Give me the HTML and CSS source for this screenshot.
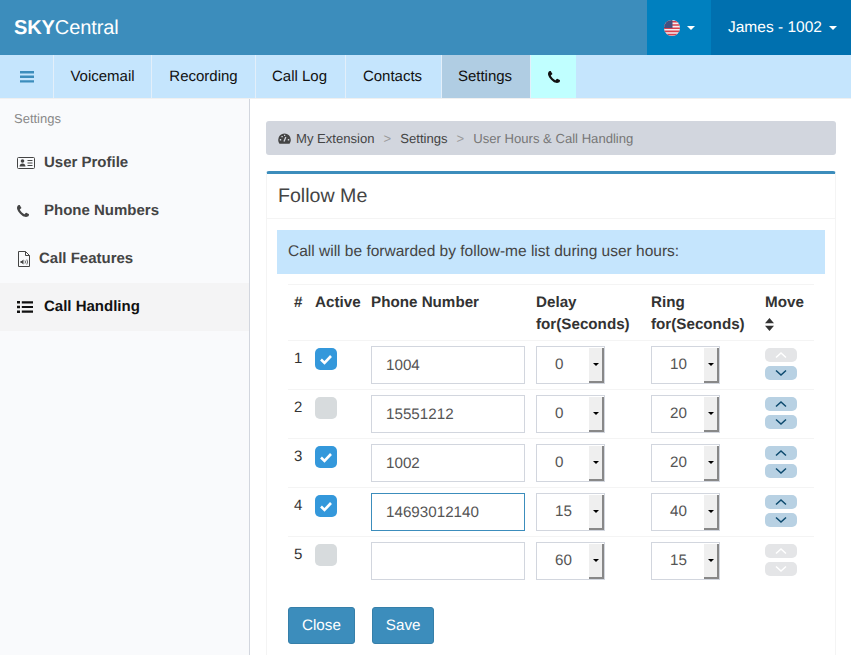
FILE: index.html
```html
<!DOCTYPE html>
<html lang="en">
<head>
    <meta charset="UTF-8">
    <meta name="viewport" content="width=device-width, initial-scale=1.0">
    <title>SKYCentral - Follow Me</title>
    <link rel="stylesheet" href="styles.css">
</head>
<body>
    <svg class="defs" width="0" height="0">
        <symbol id="phone" viewBox="0 128 1408 1408">
            <path fill="currentColor" d="M1408 1240q0 27-10 70.5t-21 68.5q-21 50-122 106-94 51-186 51-27 0-53-3.5t-57.5-12.5-47-14.5-55.5-20.5-49-18q-98-35-175-83-127-79-264-216t-216-264q-48-77-83-175-3-9-18-49t-20.5-55.5-14.5-47-12.5-57.5-3.5-53q0-92 51-186 56-101 106-122 25-11 68.5-21t70.5-10q14 0 21 3 18 6 53 76 11 19 30 54t35 63.5 31 53.5q3 4 17.5 25t21.5 35.5 7 28.5q0 20-28.5 50t-62 55-62 53-28.5 46q0 9 5 22.5t8.5 20.5 14 24 11.5 19q76 137 174 235t235 174q2 1 19 11.5t24 14 20.5 8.5 22.5 5q18 0 46-28.5t53-62 55-62 50-28.5q14 0 28.5 7t35.5 21.5 25 17.5q25 15 53.5 31t63.5 35 54 30q70 35 76 53 3 7 3 21z"/>
        </symbol>
        <symbol id="check" viewBox="0 0 22 22">
            <path d="M6 11.500l3.500 3.500L16 8" fill="none" stroke="currentColor" stroke-width="2.600"/>
        </symbol>
        <symbol id="chev-up" viewBox="0 0 32 14">
            <path d="M11 9.500L16 5l5 4.500" fill="none" stroke="currentColor" stroke-width="1.500"/>
        </symbol>
        <symbol id="chev-down" viewBox="0 0 32 14">
            <path d="M11 4.500L16 9l5-4.500" fill="none" stroke="currentColor" stroke-width="1.500"/>
        </symbol>
    </svg>

    <header class="topbar">
        <a class="logo"><b>SKY</b>Central</a>
        <div class="lang">
            <svg class="flag" width="16" height="16" viewBox="0 0 16 16">
                <defs><clipPath id="flagclip"><circle cx="8" cy="8" r="8"/></clipPath></defs>
                <g clip-path="url(#flagclip)">
                    <rect width="16" height="16" fill="#f4f0f2"/>
                    <path d="M0 1h16v1.600H0zM0 4.200h16v1.600H0zM0 7.400h16V9H0zM0 10.600h16v1.600H0zM0 13.800h16v1.600H0z" fill="#d8414f"/>
                    <rect width="8.500" height="8" fill="#46507f"/>
                </g>
            </svg>
            <span class="caret"></span>
        </div>
        <div class="user">James - 1002 <span class="caret"></span></div>
    </header>

    <nav class="tabs">
        <a class="tab tab-menu">
            <svg width="14" height="12" viewBox="0 0 14 12"><path d="M0 0h14v2.400H0zM0 4.600h14V7H0zM0 9.200h14v2.400H0z" fill="#3c8dbc"/></svg>
        </a>
        <a class="tab tab-voicemail">Voicemail</a>
        <a class="tab tab-recording">Recording</a>
        <a class="tab tab-calllog">Call Log</a>
        <a class="tab tab-contacts">Contacts</a>
        <a class="tab tab-settings active">Settings</a>
        <a class="tab tab-phone"><svg width="12" height="12"><use href="#phone"/></svg></a>
    </nav>

    <div class="main">
        <aside class="sidebar">
            <div class="side-title">Settings</div>
            <a class="side-item">
                <span class="side-icon">
                    <svg width="18" height="14" viewBox="0 0 18 14">
                        <rect x="0.500" y="1.500" width="17" height="11" rx="1" fill="none" stroke="currentColor"/>
                        <circle cx="5.500" cy="5" r="1.800" fill="currentColor"/>
                        <path d="M2.500 10.500c0-4 6-4 6 0z" fill="currentColor"/>
                        <path d="M10.500 4.500h5M10.500 7h5M10.500 9.500h5" stroke="currentColor"/>
                    </svg>
                </span>User Profile
            </a>
            <a class="side-item">
                <span class="side-icon"><svg width="12" height="12"><use href="#phone"/></svg></span>Phone Numbers
            </a>
            <a class="side-item">
                <span class="side-icon side-icon-file">
                    <svg width="14" height="16" viewBox="0 0 14 16">
                        <path d="M1.500 0.500h7l4 4v11h-11z M8.500 0.500v4h4" fill="none" stroke="currentColor"/>
                        <path d="M3.500 10h1.200l1.800-1.500v5L4.700 12H3.500z" fill="currentColor"/>
                        <path d="M8 9.500q1 1.500 0 3M9.800 8.500q1.600 2.500 0 5" fill="none" stroke="currentColor" stroke-width="0.800"/>
                    </svg>
                </span>Call Features
            </a>
            <a class="side-item active">
                <span class="side-icon">
                    <svg width="16" height="12" viewBox="0 0 16 12">
                        <path d="M0 0h3v2.600H0zM0 4.700h3v2.600H0zM0 9.400h3V12H0zM4.800 0.200H16v2.200H4.800zM4.800 4.900H16v2.200H4.800zM4.800 9.600H16v2.200H4.800z" fill="currentColor"/>
                    </svg>
                </span>Call Handling
            </a>
        </aside>

        <main class="content">
            <div class="breadcrumb">
                <svg class="crumb-icon" width="13" height="11" viewBox="0 0 13 11">
                    <path d="M6.500 0.500A6.300 6.300 0 0 0 .2 6.800c0 1.500.4 2.800 1.300 3.900h10c.9-1.100 1.300-2.400 1.300-3.900A6.300 6.300 0 0 0 6.500.5z" fill="#444"/>
                    <path d="M6 8.500L7.800 4" stroke="#d2d6de" stroke-width="1.300" fill="none"/>
                    <path d="M1.800 6h1.400v1.400H1.800zM3.400 2.900h1.400v1.400H3.400zM6 1.700h1.200v1.300H6zM9.800 6h1.400v1.400H9.800z" fill="#d2d6de"/>
                </svg>
                <a class="crumb">My Extension</a>
                <span class="crumb-sep">&gt;</span>
                <a class="crumb">Settings</a>
                <span class="crumb-sep">&gt;</span>
                <span class="crumb-current">User Hours &amp; Call Handling</span>
            </div>

            <section class="box">
                <h2 class="box-title">Follow Me</h2>
                <div class="box-body">
                    <div class="alert">Call will be forwarded by follow-me list during user hours:</div>

                    <table class="follow">
                        <colgroup>
                            <col class="c-num"><col class="c-active"><col class="c-phone">
                            <col class="c-delay"><col class="c-ring"><col class="c-move">
                        </colgroup>
                        <thead>
                            <tr>
                                <th class="num">#</th>
                                <th>Active</th>
                                <th>Phone Number</th>
                                <th>Delay<br>for(Seconds)</th>
                                <th>Ring<br>for(Seconds)</th>
                                <th>Move<br>
                                    <svg class="sort" width="9" height="13" viewBox="0 0 9 13"><path d="M4.500 0L9 5.300H0zM0 7.700h9L4.500 13z" fill="#333"/></svg>
                                </th>
                            </tr>
                        </thead>
                        <tbody>
                            <tr>
                                <td class="num">1</td>
                                <td><span class="check on"><svg width="22" height="22"><use href="#check"/></svg></span></td>
                                <td><input class="field" type="text" value="1004"></td>
                                <td><div class="spin"><span class="spin-val">0</span><span class="spin-btn"></span></div></td>
                                <td><div class="spin"><span class="spin-val">10</span><span class="spin-btn"></span></div></td>
                                <td>
                                    <div class="move">
                                        <span class="mv off"><svg width="32" height="14"><use href="#chev-up"/></svg></span>
                                        <span class="mv"><svg width="32" height="14"><use href="#chev-down"/></svg></span>
                                    </div>
                                </td>
                            </tr>
                            <tr>
                                <td class="num">2</td>
                                <td><span class="check"></span></td>
                                <td><input class="field" type="text" value="15551212"></td>
                                <td><div class="spin"><span class="spin-val">0</span><span class="spin-btn"></span></div></td>
                                <td><div class="spin"><span class="spin-val">20</span><span class="spin-btn"></span></div></td>
                                <td>
                                    <div class="move">
                                        <span class="mv"><svg width="32" height="14"><use href="#chev-up"/></svg></span>
                                        <span class="mv"><svg width="32" height="14"><use href="#chev-down"/></svg></span>
                                    </div>
                                </td>
                            </tr>
                            <tr>
                                <td class="num">3</td>
                                <td><span class="check on"><svg width="22" height="22"><use href="#check"/></svg></span></td>
                                <td><input class="field" type="text" value="1002"></td>
                                <td><div class="spin"><span class="spin-val">0</span><span class="spin-btn"></span></div></td>
                                <td><div class="spin"><span class="spin-val">20</span><span class="spin-btn"></span></div></td>
                                <td>
                                    <div class="move">
                                        <span class="mv"><svg width="32" height="14"><use href="#chev-up"/></svg></span>
                                        <span class="mv"><svg width="32" height="14"><use href="#chev-down"/></svg></span>
                                    </div>
                                </td>
                            </tr>
                            <tr>
                                <td class="num">4</td>
                                <td><span class="check on"><svg width="22" height="22"><use href="#check"/></svg></span></td>
                                <td><input class="field focus" type="text" value="14693012140"></td>
                                <td><div class="spin"><span class="spin-val">15</span><span class="spin-btn"></span></div></td>
                                <td><div class="spin"><span class="spin-val">40</span><span class="spin-btn"></span></div></td>
                                <td>
                                    <div class="move">
                                        <span class="mv"><svg width="32" height="14"><use href="#chev-up"/></svg></span>
                                        <span class="mv"><svg width="32" height="14"><use href="#chev-down"/></svg></span>
                                    </div>
                                </td>
                            </tr>
                            <tr>
                                <td class="num">5</td>
                                <td><span class="check"></span></td>
                                <td><input class="field" type="text" value=""></td>
                                <td><div class="spin"><span class="spin-val">60</span><span class="spin-btn"></span></div></td>
                                <td><div class="spin"><span class="spin-val">15</span><span class="spin-btn"></span></div></td>
                                <td>
                                    <div class="move">
                                        <span class="mv off"><svg width="32" height="14"><use href="#chev-up"/></svg></span>
                                        <span class="mv off"><svg width="32" height="14"><use href="#chev-down"/></svg></span>
                                    </div>
                                </td>
                            </tr>
                        </tbody>
                    </table>

                    <div class="actions">
                        <button class="btn">Close</button>
                        <button class="btn">Save</button>
                    </div>
                </div>
            </section>
        </main>
    </div>
</body>
</html>
```

FILE: styles.css
```css
* {
    margin: 0;
    padding: 0;
    box-sizing: border-box;
}

html, body {
    height: 100%;
    overflow: hidden;
}

body {
    font-family: "Liberation Sans", Arial, sans-serif;
    font-size: 15px;
    color: #444;
    background: #fff;
    display: flex;
    flex-direction: column;
    text-rendering: geometricPrecision;
}

.defs {
    position: absolute;
}

/* top bar */
.topbar {
    height: 55px;
    flex: none;
    display: flex;
    align-items: stretch;
    background: #3c8dbc;
    color: #fff;
}

.logo {
    flex: 1;
    padding-left: 14px;
    font-size: 20px;
    letter-spacing: -0.1px;
    line-height: 56px;
}

.lang {
    width: 64px;
    background: #0080bf;
    display: flex;
    align-items: center;
    padding-left: 17px;
    gap: 7px;
}

.user {
    width: 140px;
    background: #0070af;
    padding-left: 17px;
    font-size: 15.500px;
    line-height: 55px;
}

.caret {
    display: inline-block;
    width: 0;
    height: 0;
    border-left: 4px solid transparent;
    border-right: 4px solid transparent;
    border-top: 4px solid #fff;
    vertical-align: middle;
    margin-left: 3px;
}

.lang .caret {
    margin-left: 0;
}

/* tabs */
.tabs {
    height: 43px;
    flex: none;
    display: flex;
    background: #c5e5fd;
}

.tab {
    display: flex;
    align-items: center;
    justify-content: center;
    color: #111;
    border-right: 1px solid #e3effa;
}

.tab-menu { width: 54px; }
.tab-voicemail { width: 98px; }
.tab-recording { width: 104px; }
.tab-calllog { width: 90px; padding-right: 2px; }
.tab-contacts { width: 96px; padding-right: 2px; }
.tab-settings { width: 89px; padding-right: 2px; }

.tab.active {
    background: #b0cde3;
}

.tab-phone {
    width: 45px;
    background: #c0ffff;
    border-right: none;
}

/* sidebar */
.main {
    flex: 1;
    display: flex;
    min-height: 0;
    border-top: 1px solid #f0f0f0;
}

.sidebar {
    width: 250px;
    flex: none;
    background: #f9fafc;
    border-right: 1px solid #d2d6de;
}

.side-title {
    height: 40px;
    padding: 12px 0 0 14px;
    font-size: 13px;
    line-height: 15px;
    color: #888;
}

.side-item {
    height: 48px;
    display: flex;
    align-items: center;
    padding-left: 17px;
    padding-bottom: 1px;
    font-weight: bold;
    color: #444;
}

.side-item.active {
    background: #f4f4f5;
    color: #111;
}

.side-icon {
    width: 27px;
    display: flex;
    align-items: center;
}

.side-icon-file {
    width: 22px;
}

/* content */
.content {
    flex: 1;
    padding: 22px 15px 0 16px;
    min-width: 0;
    display: flex;
    flex-direction: column;
}

.breadcrumb {
    height: 34px;
    flex: none;
    background: #d2d6de;
    border-radius: 3px;
    display: flex;
    align-items: center;
    padding-left: 12px;
    font-size: 13.100px;
    color: #444;
}

.crumb-icon {
    margin-right: 5px;
}

.crumb-sep {
    margin: 0 9px;
    color: #999;
}

.crumb-current {
    color: #777;
}

.box {
    flex: 1;
    min-height: 0;
    margin-top: 16px;
    border: 1px solid #f4f4f4;
    border-top: 3px solid #3c8dbc;
    border-bottom: none;
    border-radius: 3px 3px 0 0;
}

.box-title {
    height: 45px;
    padding-left: 11px;
    font-size: 19.600px;
    font-weight: normal;
    line-height: 45px;
    color: #444;
    border-bottom: 1px solid #f4f4f4;
}

.box-body {
    padding: 11px 10px 0;
}

.alert {
    height: 44px;
    background: #c5e5fd;
    padding-left: 11px;
    font-size: 15.500px;
    line-height: 44px;
    color: #444;
}

/* follow-me table */
.follow {
    margin: 10px 0 0 11px;
    width: 526px;
    table-layout: fixed;
    border-collapse: separate;
    border-spacing: 0;
    line-height: 22px;
}

.c-num { width: 22px; }
.c-active { width: 56px; }
.c-phone { width: 165px; }
.c-delay { width: 115px; }
.c-ring { width: 114px; }
.c-move { width: 54px; }

.follow th, .follow td {
    text-align: left;
    vertical-align: top;
    border-top: 1px solid #f4f4f4;
    padding: 5px;
}

.follow th {
    padding-top: 7px;
    padding-bottom: 4px;
    font-size: 15.200px;
    color: #333;
    white-space: nowrap;
}

.follow td.num {
    padding-top: 7px;
    color: #333;
}

.follow .num {
    padding-left: 6px;
}

.sort {
    display: block;
    margin-top: 4px;
}

.check {
    display: block;
    width: 22px;
    height: 22px;
    margin-top: 2px;
    border-radius: 5px;
    background: #d7dbdd;
    color: #fff;
}

.check.on {
    background: #3498db;
}

.check svg {
    display: block;
}

.field {
    display: block;
    width: 154px;
    height: 38px;
    padding-left: 14px;
    border: 1px solid #d2d6de;
    font-family: inherit;
    font-size: 15.200px;
    color: #555;
    outline: none;
    text-rendering: geometricPrecision;
}

.field.focus {
    border-color: #3c8dbc;
}

.spin {
    width: 69px;
    height: 38px;
    border: 1px solid #d2d6de;
    display: flex;
    font-size: 15.200px;
    color: #555;
    line-height: 36px;
}

.spin-val {
    flex: 1;
    padding-left: 18px;
}

.spin-btn {
    width: 15px;
    margin: 1px 0 0;
    background: #efefef;
    border-right: 2px solid #888;
    border-bottom: 2px solid #888;
    display: flex;
    align-items: center;
    justify-content: center;
}

.spin-btn::after {
    content: "";
    border-left: 3px solid transparent;
    border-right: 3px solid transparent;
    border-top: 3px solid #000;
}

.move {
    display: flex;
    flex-direction: column;
    gap: 4px;
    margin-top: 2px;
}

.mv {
    display: block;
    width: 32px;
    height: 14px;
    border-radius: 5px;
    background: #b8d1e3;
    color: #0c4a6e;
}

.mv svg {
    display: block;
}

.mv.off {
    background: #e4e5e7;
    color: #fff;
}

.actions {
    display: flex;
    gap: 17px;
    margin: 22px 0 0 11px;
}

.btn {
    height: 37px;
    padding: 0 13px;
    background: #3c8dbc;
    border: 1px solid #367fa9;
    border-radius: 3px;
    color: #fff;
    font-family: inherit;
    font-size: 15.200px;
    text-rendering: geometricPrecision;
}
```
